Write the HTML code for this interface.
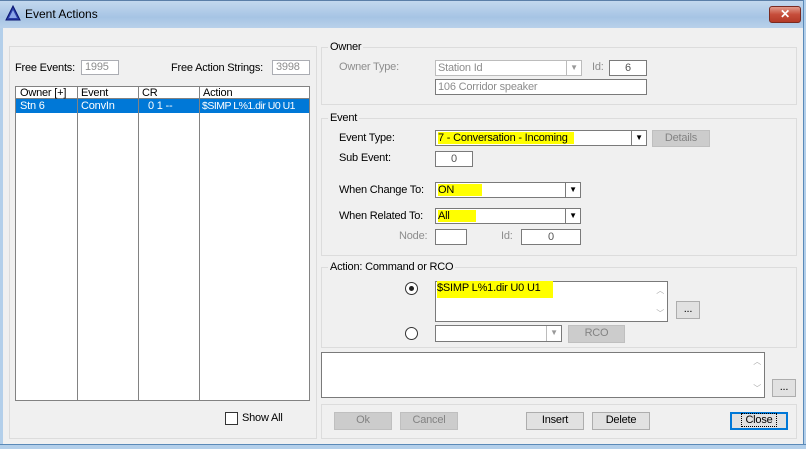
<!DOCTYPE html>
<html><head><style>
*{margin:0;padding:0;box-sizing:border-box}
body{width:806px;height:449px;overflow:hidden;background:#f0f0f0;font-family:"Liberation Sans",sans-serif;font-size:11px;letter-spacing:-0.2px;color:#000;position:relative}
.a{position:absolute}
.grp{position:absolute;border:1px solid #dcdcdc;}
.gl{position:absolute;background:#f0f0f0;padding:0 2px;top:-8px;left:6px;color:#000}
.box{position:absolute;background:#fff;border:1px solid #7a7a7a;white-space:nowrap}
.dis{color:#8d8d8d}
.btn{position:absolute;background:#e1e1e1;border:1px solid #adadad;text-align:center;line-height:15px}
.btnd{position:absolute;background:#cccccc;border:1px solid #bfbfbf;text-align:center;color:#838383;line-height:15px}
.hl{background:#ffff00}
.arr{position:absolute;right:0;top:0;bottom:0;width:15px;border-left:1px solid #7a7a7a;text-align:center;font-size:8px;line-height:14px}
</style></head><body>
<div class="a" style="left:0;top:0;width:806px;height:28px;background:linear-gradient(#c3d8ee,#a6c4e4 60%,#b9d1ea);border-top:1px solid #5b7fa8"></div>
<div class="a" style="left:0;top:28px;width:3px;height:421px;background:#b3cfea"></div>
<div class="a" style="left:803px;top:0;width:3px;height:449px;background:#b3cfea;border-left:1px solid #5b8ab8"></div>
<div class="a" style="left:0;top:444px;width:806px;height:5px;background:#b3cfea;border-top:1px solid #5b8ab8"></div>
<svg class="a" style="left:5px;top:5px" width="16" height="16"><polygon points="8,1 15,15 1,15" fill="#2a3fa8" stroke="#0a1570"/><polygon points="8,5 12,13 4,13" fill="#8ba6e8"/></svg>
<div class="a" style="left:25px;top:7px;font-size:12px;color:#000;letter-spacing:0">Event Actions</div>
<div class="a" style="left:769px;top:6px;width:32px;height:17px;background:linear-gradient(#e29a8a,#c64d3a 50%,#b43a28);border:1px solid #7a2a20;border-radius:3px;color:#fff;font-weight:bold;text-align:center;line-height:15px;font-size:12px">✕</div>

<div class="grp" style="left:9px;top:46px;width:308px;height:393px"></div>
<div class="a" style="left:15px;top:62px">Free Events:</div>
<div class="box dis" style="left:81px;top:60px;width:38px;height:15px;border-color:#abadb3;padding-left:3px;line-height:13px">1995</div>
<div class="a" style="left:171px;top:62px">Free Action Strings:</div>
<div class="box dis" style="left:272px;top:60px;width:38px;height:15px;border-color:#abadb3;padding-left:3px;line-height:13px">3998</div>
<div class="box" style="left:15px;top:86px;width:295px;height:315px;border-color:#828282;overflow:hidden">
 <div class="a" style="left:0;top:0;width:293px;height:12px;border-bottom:1px solid #828282"></div>
 <div class="a" style="left:0;top:12px;width:293px;height:14px;background:#0078d7"></div>
 <div class="a" style="left:61px;top:0;height:313px;border-left:1px solid #828282"></div>
 <div class="a" style="left:122px;top:0;height:313px;border-left:1px solid #828282"></div>
 <div class="a" style="left:183px;top:0;height:313px;border-left:1px solid #828282"></div>
 <div class="a" style="left:4px;top:0">Owner [+]</div><div class="a" style="left:65px;top:0">Event</div><div class="a" style="left:126px;top:0">CR</div><div class="a" style="left:187px;top:0">Action</div>
 <div class="a" style="left:4px;top:13px;color:#fff">Stn 6</div><div class="a" style="left:65px;top:13px;color:#fff">ConvIn</div><div class="a" style="left:132px;top:13px;color:#fff">0 1 --</div><div class="a" style="left:186px;top:13px;color:#fff;letter-spacing:-0.5px;font-size:10.5px">$SIMP L%1.dir U0 U1</div>
</div>
<div class="a" style="left:225px;top:412px;width:13px;height:13px;border:1px solid #333;background:#fff"></div>
<div class="a" style="left:242px;top:412px">Show All</div>

<div class="grp" style="left:321px;top:47px;width:476px;height:58px"><span class="gl" style="top:-7px">Owner</span></div>
<div class="a dis" style="left:339px;top:61px">Owner Type:</div>
<div class="box dis" style="left:435px;top:60px;width:147px;height:16px;border-color:#bcbcbc;padding-left:2px;line-height:14px">Station Id<span class="arr" style="border-color:#bcbcbc;color:#999">▼</span></div>
<div class="a dis" style="left:592px;top:61px">Id:</div>
<div class="box" style="left:609px;top:60px;width:38px;height:16px;text-align:center;line-height:14px;color:#555">6</div>
<div class="box dis" style="left:435px;top:79px;width:212px;height:16px;padding-left:2px;line-height:14px">106 Corridor speaker</div>

<div class="grp" style="left:321px;top:118px;width:476px;height:138px"><span class="gl" style="top:-7px">Event</span></div>
<div class="a" style="left:339px;top:132px">Event Type:</div>
<div class="box" style="left:435px;top:130px;width:212px;height:16px;padding-left:2px;line-height:14px"><span class="hl" style="padding-right:6px">7 - Conversation - Incoming</span><span class="arr">▼</span></div>
<div class="btnd" style="left:652px;top:130px;width:58px;height:17px">Details</div>
<div class="a" style="left:339px;top:152px">Sub Event:</div>
<div class="box" style="left:435px;top:151px;width:38px;height:16px;text-align:center;line-height:14px;color:#555">0</div>
<div class="a" style="left:339px;top:184px">When Change To:</div>
<div class="box" style="left:435px;top:182px;width:146px;height:16px;padding-left:2px;line-height:14px"><span class="hl" style="padding-right:28px">ON</span><span class="arr">▼</span></div>
<div class="a" style="left:339px;top:210px">When Related To:</div>
<div class="box" style="left:435px;top:208px;width:146px;height:16px;padding-left:2px;line-height:14px"><span class="hl" style="padding-right:26px">All</span><span class="arr">▼</span></div>
<div class="a dis" style="left:399px;top:230px">Node:</div>
<div class="box" style="left:435px;top:229px;width:32px;height:16px"></div>
<div class="a dis" style="left:501px;top:230px">Id:</div>
<div class="box" style="left:521px;top:229px;width:60px;height:16px;text-align:center;line-height:14px;color:#555">0</div>

<div class="grp" style="left:321px;top:267px;width:476px;height:81px"><span class="gl" style="top:-7px">Action: Command or RCO</span></div>
<div class="a" style="left:405px;top:282px;width:13px;height:13px;border-radius:50%;border:1px solid #333;background:#fff"><div class="a" style="left:3px;top:3px;width:5px;height:5px;border-radius:50%;background:#222"></div></div>
<div class="box" style="left:435px;top:281px;width:233px;height:41px;padding-left:1px"><span class="hl" style="padding:1px 12px 4px 0">$SIMP L%1.dir U0 U1</span><div class="a" style="right:3px;top:3px;color:#aaa;font-size:8px">︿</div><div class="a" style="right:3px;top:26px;color:#aaa;font-size:8px">﹀</div></div>
<div class="btn" style="left:676px;top:301px;width:24px;height:18px">...</div>
<div class="a" style="left:405px;top:327px;width:13px;height:13px;border-radius:50%;border:1px solid #333;background:#fff"></div>
<div class="box" style="left:435px;top:325px;width:127px;height:17px;border-color:#7a7a7a"><span class="arr" style="border-color:#bcbcbc;color:#999">▼</span></div>
<div class="btnd" style="left:568px;top:325px;width:57px;height:18px">RCO</div>

<div class="box" style="left:321px;top:352px;width:444px;height:46px;border-color:#7a7a7a"><div class="a" style="right:3px;top:3px;color:#aaa;font-size:8px">︿</div><div class="a" style="right:3px;top:30px;color:#aaa;font-size:8px">﹀</div></div>
<div class="btn" style="left:772px;top:379px;width:24px;height:18px">...</div>

<div class="grp" style="left:321px;top:404px;width:476px;height:35px"></div>
<div class="btnd" style="left:334px;top:412px;width:58px;height:18px">Ok</div>
<div class="btnd" style="left:400px;top:412px;width:58px;height:18px">Cancel</div>
<div class="btn" style="left:526px;top:412px;width:58px;height:18px">Insert</div>
<div class="btn" style="left:592px;top:412px;width:58px;height:18px">Delete</div>
<div class="btn" style="left:730px;top:412px;width:58px;height:18px;border:2px solid #0078d7;line-height:13px"><span style="outline:1px dotted #000;padding:0 3px">Close</span></div>
</body></html>
